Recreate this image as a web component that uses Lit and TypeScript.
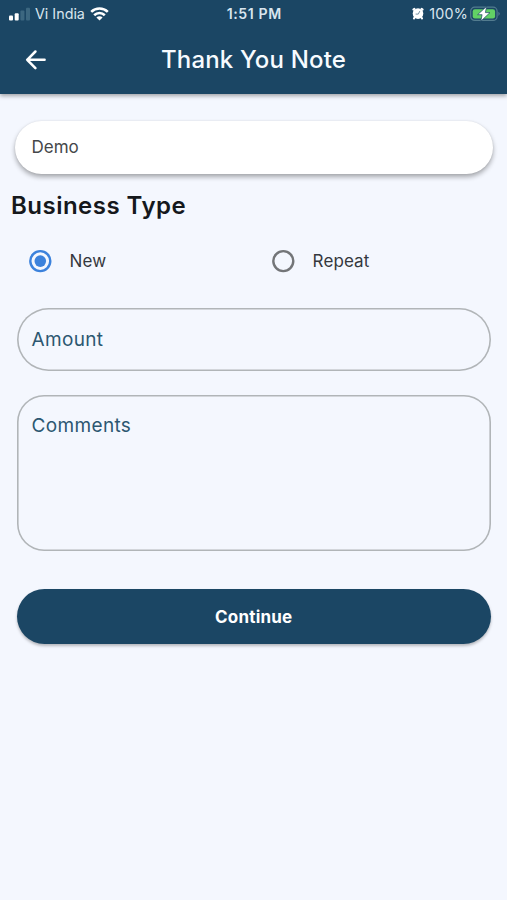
import { LitElement, html, css } from "lit";
import { customElement, state } from "lit/decorators.js";

@customElement("status-bar")
class StatusBar extends LitElement {
  static styles = css`
    :host { display: grid; grid-template-columns: 1fr auto 1fr; align-items: center; height: 27px; padding: 0 6px 0 9px; color: #d9e5ee; font-size: 14.3px; line-height: 20px; box-sizing: border-box; }
    .left, .right { display: flex; align-items: center; }
    .right { justify-content: flex-end; }
    .signal { margin-right: 5px; }
    .wifi { margin-left: 5px; }
    .clock { font-weight: 600; font-size: 14.1px; letter-spacing: 0.6px; margin-right: 1.5px; }
    .alarm { margin-right: 5px; }
    .percent { letter-spacing: 0.2px; }
    .battery { margin-left: 2px; }
    svg { display: block; flex: none; }
  `;
  render() {
    return html`
      <div class="left">
        <svg class="signal" width="21" height="14" viewBox="0 0 21 14">
          <rect x="0" y="8.6" width="4" height="4.8" rx="1" fill="#fff" />
          <rect x="5.7" y="6.2" width="4" height="7.2" rx="1" fill="#fff" />
          <rect x="11.4" y="3.4" width="4" height="10" rx="1" fill="#3c6780" />
          <rect x="17" y="0.8" width="4" height="12.6" rx="1" fill="#3c6780" />
        </svg>
        <span>Vi India</span>
        <svg class="wifi" width="19" height="14" viewBox="0 0 19 14" fill="none" stroke="#fff" stroke-width="2.6">
          <path d="M1.2 4.9a12 12 0 0 1 16.6 0" />
          <path d="M4.2 8.2a7.6 7.6 0 0 1 10.6 0" />
          <path d="M9.5 13.6 6.4 10.6a4.2 4.2 0 0 1 6.2 0z" fill="#fff" stroke="none" />
        </svg>
      </div>
      <span class="clock">1:51 PM</span>
      <div class="right">
        <svg class="alarm" width="12" height="13" viewBox="0 0 12 13">
          <path d="M1.4 2.6 2.4 1.8M10.6 2.6 9.6 1.8M2.6 10.5 2 11.4M9.4 10.5l.6.9" stroke="#fff" stroke-width="2" stroke-linecap="round" />
          <circle cx="6" cy="6.6" r="5.3" fill="#fff" />
          <path d="M3.6 7.1h2.7l1.5-3" fill="none" stroke="#7892a4" stroke-width="1" />
        </svg>
        <span class="percent">100%</span>
        <svg class="battery" width="31" height="16" viewBox="0 0 31 16">
          <rect x="0.7" y="1.2" width="26.4" height="13.2" rx="4" fill="none" stroke="#537c8f" stroke-width="1.2" />
          <rect x="2.7" y="3.2" width="22.4" height="9.2" rx="2.2" fill="#62d265" />
          <path d="M28.4 5.7q2.8 2.1 0 4.2z" fill="#537c8f" />
          <path d="M16.6.4 7.6 8.7h4.5L10.8 15.2l9.2-8.6h-4.6z" fill="#fff" stroke="#1b4664" stroke-width=".7" />
        </svg>
      </div>
    `;
  }
}

@customElement("radio-option")
class RadioOption extends LitElement {
  static properties = { checked: { type: Boolean } };
  declare checked: boolean;
  static styles = css`
    :host { display: flex; align-items: center; gap: 18px; font-size: 17px; letter-spacing: 0.1px; line-height: 24px; color: #34383d; }
    svg { display: block; }
    .ring { fill: none; stroke: #737578; stroke-width: 2.4; }
    .on .ring { stroke: #3c82dc; }
    .dot { fill: #3c82dc; }
  `;
  render() {
    return html`
      <svg class=${this.checked ? "on" : ""} width="23" height="24" viewBox="0 0 23 24">
        <circle class="ring" cx="11.3" cy="12.1" r="10" />
        <circle class="dot" cx="11.3" cy="12.1" r=${this.checked ? 5.8 : 0} />
      </svg>
      <slot></slot>
    `;
  }
}

@customElement("app-root")
class AppRoot extends LitElement {
  @state() private type = "New";

  static styles = css`
    :host { display: block; height: 900px; overflow: hidden; background: #f4f7fe; font-family: Inter, "Liberation Sans", sans-serif; box-sizing: border-box; }
    * { box-sizing: border-box; }
    .top { height: 94px; background: #1b4664; box-shadow: 0 2px 4px rgba(0, 0, 0, 0.34); }
    .bar { display: grid; grid-template-columns: 70px 1fr 70px; align-items: center; height: 66px; }
    .back { display: block; margin-left: 24.5px; }
    .title { margin: 0; text-align: center; color: #f7fbff; font-size: 24px; line-height: 32px; font-weight: 500; letter-spacing: 0.18px; }
    .member { margin: 27px 14px 0 15px; height: 53px; border-radius: 27px; background: #fff; padding: 0 16.5px 2px; display: flex; align-items: center; font-size: 17px; color: #45474a; box-shadow: 0 3px 5px rgba(0, 0, 0, 0.32), 0 0 2px rgba(0, 0, 0, 0.08); }
    .heading { margin: 16px 0 0 11px; font-size: 24px; line-height: 32px; font-weight: 600; letter-spacing: 0.48px; color: #15181c; }
    .options { display: grid; grid-template-columns: 243px 1fr; margin: 27px 0 0 28.6px; }
    .field { margin: 35px 16px 0 16.5px; padding: 0 15px; box-shadow: inset 0 0 0 1.6px #b1b5b8; color: #2c5771; font-size: 19px; line-height: 28px; letter-spacing: 0.35px; }
    .amount { height: 63px; border-radius: 32px; display: flex; align-items: center; }
    .comments { height: 156px; margin-top: 24px; border-radius: 27px; padding-top: 17px; }
    .submit { display: block; width: calc(100% - 32.5px); height: 55px; margin: 38px 16px 0 16.5px; padding: 0; border: 0; border-radius: 28px; background: #1b4664; color: #fff; font: 700 17px/24px Inter, "Liberation Sans", sans-serif; letter-spacing: 0.2px; box-shadow: 0 2px 3px rgba(0, 0, 0, 0.26); }
  `;

  render() {
    return html`
      <header class="top">
        <status-bar></status-bar>
        <div class="bar">
          <svg class="back" width="21" height="20" viewBox="0 0 21 20" fill="none" stroke="#fff" stroke-width="2.5" stroke-linecap="round" stroke-linejoin="round">
            <path d="M19.6 9.8H2.2M10.4 1.5 2.2 9.8l8.2 8.3" />
          </svg>
          <h1 class="title">Thank You Note</h1>
        </div>
      </header>
      <div class="member">Demo</div>
      <h2 class="heading">Business Type</h2>
      <div class="options">
        ${["New", "Repeat"].map(
          (name) => html`<radio-option .checked=${this.type === name} @click=${() => (this.type = name)}>${name}</radio-option>`
        )}
      </div>
      <div class="field amount">Amount</div>
      <div class="field comments">Comments</div>
      <button class="submit">Continue</button>
    `;
  }
}
